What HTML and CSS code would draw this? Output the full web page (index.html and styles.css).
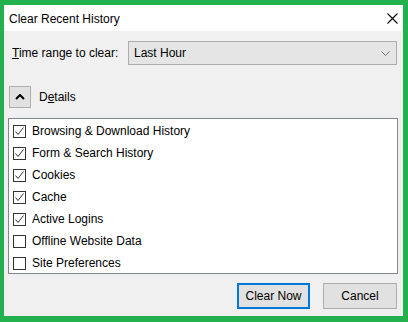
FILE: index.html
```html
<!DOCTYPE html>
<html lang="en">
<head>
    <meta charset="UTF-8">
    <title>Clear Recent History</title>
    <link rel="stylesheet" href="styles.css">
</head>
<body>
    <div class="dialog">
        <div class="titlebar">
            <span class="title">Clear Recent History</span>
            <span class="close">
                <svg width="11" height="11" viewBox="0 0 11 11"><path d="M0.5 0.5 L10.5 10.5 M10.5 0.5 L0.5 10.5" stroke="#000" stroke-width="1.1" fill="none"/></svg>
            </span>
        </div>

        <div class="content">
            <div class="range-row">
                <label class="range-label"><u>T</u>ime range to clear:</label>
                <div class="select">
                    <span>Last Hour</span>
                    <svg width="9" height="5" viewBox="0 0 9 5"><path d="M0.5 0.5 L4.5 4.5 L8.5 0.5" stroke="#707070" fill="none"/></svg>
                </div>
            </div>

            <div class="details-row">
                <div class="toggle">
                    <svg width="10" height="6" viewBox="0 0 10 6"><path d="M1 5 L5 1 L9 5" stroke="#000" stroke-width="2" fill="none"/></svg>
                </div>
                <span class="details-label">D<u>e</u>tails</span>
            </div>

            <div class="list">
                <div class="item"><span class="box"><svg width="11" height="11" viewBox="0 0 11 11"><path d="M1.5 5.5 L4 8.5 L9.5 1.5" stroke="#333" fill="none"/></svg></span>Browsing &amp; Download History</div>
                <div class="item"><span class="box"><svg width="11" height="11" viewBox="0 0 11 11"><path d="M1.5 5.5 L4 8.5 L9.5 1.5" stroke="#333" fill="none"/></svg></span>Form &amp; Search History</div>
                <div class="item"><span class="box"><svg width="11" height="11" viewBox="0 0 11 11"><path d="M1.5 5.5 L4 8.5 L9.5 1.5" stroke="#333" fill="none"/></svg></span>Cookies</div>
                <div class="item"><span class="box"><svg width="11" height="11" viewBox="0 0 11 11"><path d="M1.5 5.5 L4 8.5 L9.5 1.5" stroke="#333" fill="none"/></svg></span>Cache</div>
                <div class="item"><span class="box"><svg width="11" height="11" viewBox="0 0 11 11"><path d="M1.5 5.5 L4 8.5 L9.5 1.5" stroke="#333" fill="none"/></svg></span>Active Logins</div>
                <div class="item"><span class="box"></span>Offline Website Data</div>
                <div class="item"><span class="box"></span>Site Preferences</div>
            </div>

            <div class="buttons">
                <button class="btn default">Clear Now</button>
                <button class="btn">Cancel</button>
            </div>
        </div>
    </div>
</body>
</html>
```

FILE: styles.css
```css
body {
    margin: 0;
    background-color: #22b14c;
    font-family: "Liberation Sans", Arial, sans-serif;
    font-size: 12px;
    color: #000;
    width: 408px;
    height: 322px;
    overflow: hidden;
}

.dialog {
    margin: 5px 5px 0 4px;
    width: 399px;
    height: 311px;
    background-color: #f0f0f0;
    display: flex;
    flex-direction: column;
}

.titlebar {
    height: 26px;
    background-color: #ffffff;
    display: flex;
    align-items: center;
    padding: 0 0 0 5px;
}

.title {
    flex: 1;
    margin-top: 1px;
}

.close {
    width: 11px;
    height: 11px;
    margin-right: 5px;
    display: flex;
}

.content {
    padding: 10px 5px 0 4px;
}

.range-row {
    display: flex;
    align-items: center;
    height: 24px;
}

.range-label {
    margin-left: 4px;
}

.select {
    margin-left: auto;
    margin-right: 1px;
    width: 269px;
    height: 24px;
    background-color: #e5e5e5;
    border: 1px solid #acacac;
    display: flex;
    align-items: center;
    justify-content: space-between;
    padding: 0 6px 0 5px;
    box-sizing: border-box;
}

.details-row {
    display: flex;
    align-items: center;
    margin-top: 21px;
    height: 22px;
}

.toggle {
    margin-left: 1px;
    width: 22px;
    height: 22px;
    box-sizing: border-box;
    background-color: #e1e1e1;
    border: 1px solid #adadad;
    display: flex;
    align-items: center;
    justify-content: center;
}

.details-label {
    margin-left: 8px;
}

.list {
    margin-top: 10px;
    height: 156px;
    box-sizing: border-box;
    border: 1px solid #828790;
    background-color: #ffffff;
    padding: 1px 0 0 4px;
}

.item {
    height: 22px;
    display: flex;
    align-items: center;
}

.box {
    width: 13px;
    height: 13px;
    box-sizing: border-box;
    border: 1px solid #333333;
    background-color: #ffffff;
    margin-right: 6px;
    display: flex;
}

.buttons {
    display: flex;
    justify-content: flex-end;
    gap: 13px;
    margin-top: 9px;
    margin-right: 1px;
}

.btn {
    font-family: "Liberation Sans", Arial, sans-serif;
    font-size: 12px;
    color: #000;
    height: 26px;
    width: 74px;
    background-color: #e1e1e1;
    border: 1px solid #adadad;
    padding: 0;
    box-sizing: border-box;
}

.btn.default {
    width: 73px;
    border: 2px solid #0078d7;
}
```
